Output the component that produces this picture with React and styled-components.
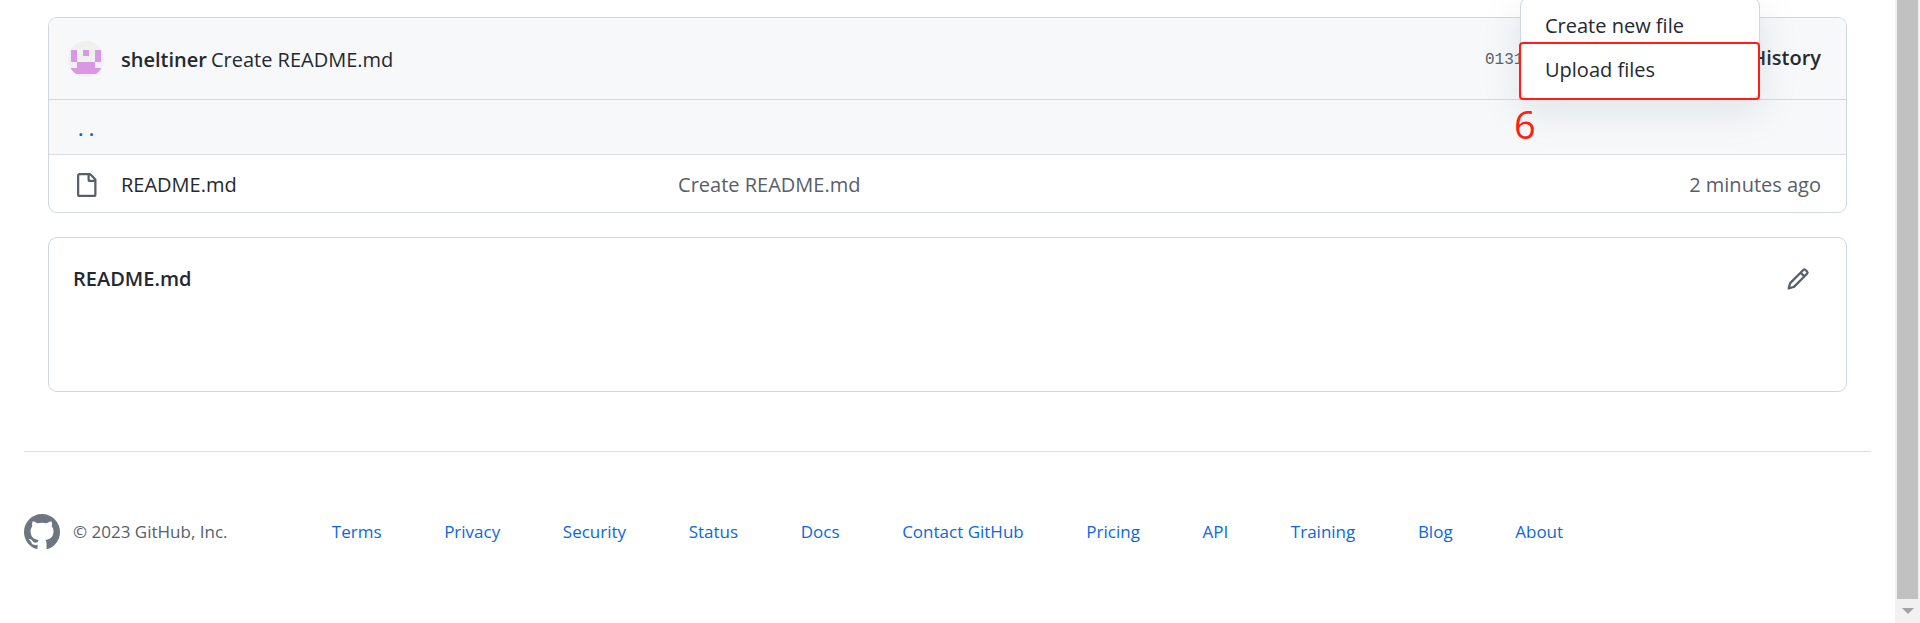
import React from "react";
import styled, { createGlobalStyle } from "styled-components";

const GlobalStyle = createGlobalStyle`
  * { box-sizing: border-box; }
  body {
    margin: 0;
    background: #fff;
    color: #24292f;
    font-family: "Open Sans", "Noto Sans", sans-serif;
    font-size: 20px;
    line-height: 32px;
  }
`;

const Shell = styled.div`
  display: flex;
  min-height: 100vh;
  overflow: hidden;
`;

const Page = styled.div`
  flex: 1;
  min-width: 0;
  padding: 17px 24px 0;
`;

const Content = styled.main`
  padding: 0 24px;
  display: flex;
  flex-direction: column;
  gap: 24px;
`;

const Panel = styled.section`
  border: 1px solid #d0d7de;
  border-radius: 9px;
`;

const CommitBar = styled.header`
  position: relative;
  display: flex;
  align-items: center;
  height: 82px;
  padding: 0 25px 0 19px;
  background: #f6f8fa;
  border-bottom: 1px solid #d0d7de;
  border-radius: 8px 8px 0 0;
`;

const Avatar = styled.svg`
  width: 36px;
  height: 36px;
  margin-right: 17px;
  border-radius: 50%;
`;

const TextLink = styled.a`
  color: ${(p) => p.$color || "#24292f"};
  font-weight: ${(p) => p.$weight || 400};
  text-decoration: none;
`;

const CommitMessage = styled.div`
  flex: 1;
  display: flex;
  gap: 4px;
  padding-top: 2px;
`;

const CommitMeta = styled.div`
  display: flex;
  justify-content: space-between;
  width: 336px;
  padding-top: 2px;
`;

const Sha = styled.a`
  font-family: "Liberation Mono", monospace;
  font-size: 16px;
  line-height: 36px;
  color: #57606a;
  text-decoration: none;
`;

const Menu = styled.nav`
  position: absolute;
  z-index: 1;
  top: -21px;
  right: 86px;
  width: 240px;
  padding: 6px 0;
  background: #fff;
  border: 1px solid #d0d7de;
  border-radius: 9px;
  box-shadow: 0 12px 36px rgba(140, 149, 159, 0.2);
`;

const MenuItem = styled.a`
  display: block;
  padding: 6px 24px;
  color: #24292f;
  text-decoration: none;
`;

const Highlight = styled.div`
  position: absolute;
  left: -2px;
  right: -1px;
  bottom: -2px;
  height: 58px;
  border: 2px solid #ff1e14;
  border-radius: 4px;
  pointer-events: none;
`;

const StepNumber = styled.span`
  position: absolute;
  top: 100%;
  left: -7px;
  font-size: 38px;
  line-height: 52px;
  color: #ff1e14;
`;

const FileTable = styled.table`
  width: 100%;
  table-layout: fixed;
  border-collapse: separate;
  border-spacing: 0;
`;

const FileRow = styled.tr`
  height: ${(p) => (p.$parent ? 55 : 57)}px;
  background: ${(p) => (p.$parent ? "#f6f8fa" : "transparent")};
  td {
    border-bottom: ${(p) => (p.$parent ? "1px solid #d8dee4" : "0")};
  }
`;

const Cell = styled.td`
  width: ${(p) => p.$width || "auto"};
  padding: ${(p) => p.$pad || "2px 0 0"};
  text-align: ${(p) => p.$align || "left"};
  color: #57606a;
`;

const Icon = styled.svg`
  display: block;
  width: ${(p) => p.$size || 24}px;
  height: ${(p) => p.$size || 24}px;
  fill: ${(p) => p.$color || "#57606a"};
`;

const ReadmePanel = styled(Panel)`
  min-height: 155px;
  padding: 25px 24px 0;
`;

const ReadmeHead = styled.div`
  display: flex;
  justify-content: space-between;
  align-items: center;
`;

const ReadmeTitle = styled.h2`
  margin: 0;
  font-size: 20px;
  line-height: 32px;
  font-weight: 600;
`;

const IconButton = styled.button`
  padding: 0 12px;
  border: 0;
  background: none;
`;

const Footer = styled.footer`
  display: flex;
  align-items: center;
  margin-top: 59px;
  padding: 60px 0;
  border-top: 1px solid #d8dee4;
  font-size: 17px;
  line-height: 40px;
`;

const Brand = styled.div`
  display: flex;
  align-items: center;
  gap: 13px;
  width: 16.6667%;
  color: #57606a;
`;

const FooterLinks = styled.nav`
  display: flex;
  justify-content: space-between;
  width: 66.6667%;
`;

const ScrollTrack = styled.div`
  display: flex;
  flex-direction: column;
  width: 25px;
  padding: 0 2px;
  background: #f1f1f1;
`;

const ScrollThumb = styled.div`
  flex: 1;
  background: #c1c1c1;
`;

const ScrollArrow = styled.button`
  display: flex;
  align-items: center;
  justify-content: center;
  height: 24px;
  padding: 0;
  border: 0;
  background: none;
`;

const links = ["Terms", "Privacy", "Security", "Status", "Docs", "Contact GitHub", "Pricing", "API", "Training", "Blog", "About"];

export default function App() {
  return (
    <Shell>
      <GlobalStyle />
      <Page>
        <Content>
          <Panel>
            <CommitBar>
              <Avatar viewBox="0 0 36 36" shapeRendering="crispEdges" role="img" aria-label="sheltiner">
                <rect width="36" height="36" fill="#f0f0f0" />
                <path fill="#da97e5" d="M3 9h6v12H3zM15 9h6v6h-6zM27 9h6v12h-6zM9 21h18v6H9zM3 27h30v6H3z" />
              </Avatar>
              <CommitMessage>
                <TextLink href="#" $weight={600}>sheltiner</TextLink>
                <TextLink href="#">Create README.md</TextLink>
              </CommitMessage>
              <CommitMeta>
                <Sha href="#">0131</Sha>
                <TextLink href="#" $weight={600}>History</TextLink>
              </CommitMeta>
              <Menu>
                <MenuItem href="#">Create new file</MenuItem>
                <MenuItem href="#">Upload files</MenuItem>
                <Highlight />
                <StepNumber>6</StepNumber>
              </Menu>
            </CommitBar>
            <FileTable>
              <tbody>
                <FileRow $parent>
                  <Cell $width="72px" $pad="4px 0 0 29px">
                    <TextLink href="#" $color="#0969da" $weight={600}>. .</TextLink>
                  </Cell>
                  <Cell $width="31%" />
                  <Cell />
                  <Cell $width="20%" />
                </FileRow>
                <FileRow>
                  <Cell $pad="2px 0 0 25px">
                    <Icon viewBox="0 0 16 16" aria-hidden="true">
                      <path d="M2 1.75C2 .784 2.784 0 3.75 0h6.586c.464 0 .909.184 1.237.513l2.914 2.914c.329.328.513.773.513 1.237v9.586A1.75 1.75 0 0 1 13.25 16h-9.5A1.75 1.75 0 0 1 2 14.25Zm1.75-.25a.25.25 0 0 0-.25.25v12.5c0 .138.112.25.25.25h9.5a.25.25 0 0 0 .25-.25V6h-2.75A1.75 1.75 0 0 1 9 4.25V1.5Zm6.75.062V4.25c0 .138.112.25.25.25h2.688l-.011-.013-2.914-2.914-.013-.011Z" />
                    </Icon>
                  </Cell>
                  <Cell><TextLink href="#">README.md</TextLink></Cell>
                  <Cell><TextLink href="#" $color="#57606a">Create README.md</TextLink></Cell>
                  <Cell $align="right" $pad="2px 25px 0 0">2 minutes ago</Cell>
                </FileRow>
              </tbody>
            </FileTable>
          </Panel>
          <ReadmePanel>
            <ReadmeHead>
              <ReadmeTitle>README.md</ReadmeTitle>
              <IconButton aria-label="Edit file">
                <Icon viewBox="0 0 16 16" aria-hidden="true">
                  <path d="M11.013 1.427a1.75 1.75 0 0 1 2.474 0l1.086 1.086a1.75 1.75 0 0 1 0 2.474l-8.61 8.61c-.21.21-.47.364-.756.445l-3.251.93a.75.75 0 0 1-.927-.928l.929-3.25c.081-.286.235-.547.445-.758l8.61-8.61Zm.176 4.823L9.75 4.81l-6.286 6.287a.253.253 0 0 0-.064.108l-.558 1.953 1.953-.558a.253.253 0 0 0 .108-.064Zm1.238-3.763a.25.25 0 0 0-.354 0L10.811 3.75l1.439 1.44 1.263-1.263a.25.25 0 0 0 0-.354Z" />
                </Icon>
              </IconButton>
            </ReadmeHead>
          </ReadmePanel>
        </Content>
        <Footer>
          <Brand>
            <Icon $size={36} $color="#6e7781" viewBox="0 0 16 16" aria-hidden="true">
              <path d="M8 0C3.58 0 0 3.58 0 8c0 3.54 2.29 6.53 5.47 7.59.4.07.55-.17.55-.38 0-.19-.01-.82-.01-1.49-2.01.37-2.53-.49-2.69-.94-.09-.23-.48-.94-.82-1.13-.28-.15-.68-.52-.01-.53.63-.01 1.08.58 1.23.82.72 1.21 1.87.87 2.33.66.07-.52.28-.87.51-1.07-1.78-.2-3.64-.89-3.64-3.95 0-.87.31-1.59.82-2.15-.08-.2-.36-1.02.08-2.12 0 0 .67-.21 2.2.82.64-.18 1.32-.27 2-.27s1.36.09 2 .27c1.53-1.04 2.2-.82 2.2-.82.44 1.1.16 1.92.08 2.12.51.56.82 1.27.82 2.15 0 3.07-1.87 3.75-3.65 3.95.29.25.54.73.54 1.48 0 1.07-.01 1.93-.01 2.2 0 .21.15.46.55.38A8.01 8.01 0 0 0 16 8c0-4.42-3.58-8-8-8Z" />
            </Icon>
            <span>© 2023 GitHub, Inc.</span>
          </Brand>
          <FooterLinks>
            {links.map((l) => <TextLink key={l} href="#" $color="#0969da">{l}</TextLink>)}
          </FooterLinks>
        </Footer>
      </Page>
      <ScrollTrack>
        <ScrollThumb />
        <ScrollArrow aria-label="Scroll down">
          <svg width="12" height="6" viewBox="0 0 12 6" aria-hidden="true"><path d="M0 0h12L6 6z" fill="#a3a3a3" /></svg>
        </ScrollArrow>
      </ScrollTrack>
    </Shell>
  );
}
